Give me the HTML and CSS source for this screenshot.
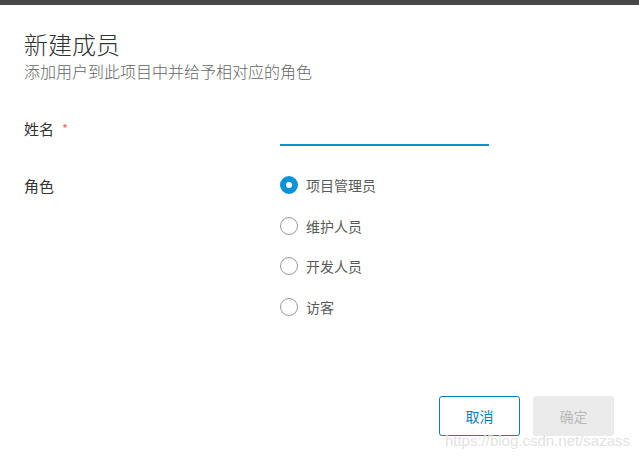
FILE: index.html
```html
<!DOCTYPE html>
<html lang="zh-CN">
<head>
<meta charset="utf-8">
<title>新建成员</title>
<link rel="stylesheet" href="styles.css">
</head>
<body>
<div class="dialog">
  <div class="header">
    <h1 class="title">新建成员</h1>
    <p class="subtitle">添加用户到此项目中并给予相对应的角色</p>
  </div>
  <div class="form">
    <div class="row row-name">
      <label class="label">姓名<span class="req">*</span></label>
      <div class="input"></div>
    </div>
    <div class="row row-role">
      <div class="label">角色</div>
      <div class="radios">
        <div class="radio checked"><span class="dot"></span><span class="rtext">项目管理员</span></div>
        <div class="radio"><span class="dot"></span><span class="rtext">维护人员</span></div>
        <div class="radio"><span class="dot"></span><span class="rtext">开发人员</span></div>
        <div class="radio"><span class="dot"></span><span class="rtext">访客</span></div>
      </div>
    </div>
  </div>
  <div class="footer">
    <button class="btn btn-cancel">取消</button>
    <button class="btn btn-ok">确定</button>
  </div>
  <div class="watermark">https://blog.csdn.net/sazass</div>
</div>
</body>
</html>
```
FILE: styles.css
```css
html, body {
  margin: 0;
  padding: 0;
  background: #fff;
}
body {
  font-family: "Noto Sans CJK SC", "Noto Sans", sans-serif;
  color: #333;
}
.dialog {
  position: relative;
  box-sizing: border-box;
  width: 639px;
  height: 457px;
  border-top: 5px solid #474747;
  padding: 23px 25px 21px 24px;
  display: flex;
  flex-direction: column;
}
.title {
  margin: 0;
  font-size: 24px;
  line-height: 32px;
  font-weight: 300;
  color: #333;
}
.subtitle {
  margin: 0;
  font-size: 16px;
  line-height: 22px;
  font-weight: 300;
  color: #666;
}
.form {
  margin-top: 36px;
}
.row {
  display: grid;
  grid-template-columns: 256px 209px;
}
.label {
  font-size: 15px;
  line-height: 22px;
  color: #333;
}
.req {
  color: #f0705a;
  font-size: 13px;
  margin-left: 8px;
  vertical-align: top;
}
.input {
  height: 26px;
  border-bottom: 2px solid #0991d4;
}
.row-role {
  margin-top: 29px;
}
.radios {
  display: flex;
  flex-direction: column;
  gap: 18.5px;
  margin-top: -1px;
}
.radio {
  display: flex;
  align-items: center;
  height: 22px;
  gap: 8px;
  font-size: 14px;
  color: #5a5a5a;
  white-space: nowrap;
}
.dot {
  box-sizing: border-box;
  width: 18px;
  height: 18px;
  border-radius: 50%;
  border: 1px solid #9a9a9a;
  background: #fff;
  flex: none;
}
.radio.checked .dot {
  border: 6px solid #0992d6;
  background: #fff;
}
.footer {
  margin-top: auto;
  display: flex;
  justify-content: flex-end;
  gap: 13px;
}
.btn {
  box-sizing: border-box;
  width: 81px;
  height: 40px;
  border-radius: 3px;
  font-family: inherit;
  font-size: 14px;
  padding: 0;
}
.btn-cancel {
  background: #fff;
  border: 1px solid #0a80c4;
  color: #0a7ec0;
}
.btn-ok {
  background: #ebebeb;
  border: 1px solid #ebebeb;
  color: #b9b9b9;
}
.watermark {
  position: absolute;
  right: 9px;
  bottom: 8px;
  font-family: "Liberation Sans", Arial, sans-serif;
  font-size: 15px;
  color: rgba(215, 215, 215, 0.75);
  text-shadow: 0 0 1px rgba(255, 255, 255, 0.8);
}
```
